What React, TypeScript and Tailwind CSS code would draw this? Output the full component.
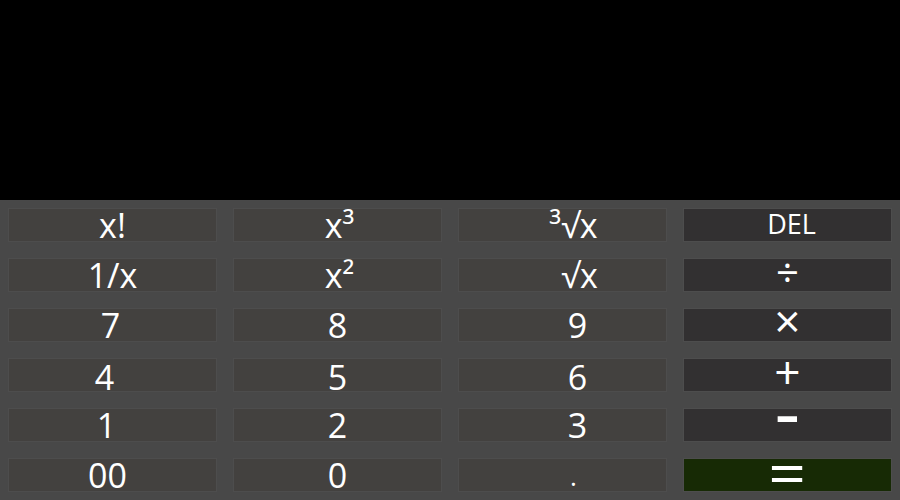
type Key = { label: React.ReactNode; kind: 'num' | 'op' | 'eq'; cls?: string }

const KEYS: Key[] = [
  { label: 'x!', kind: 'num' },
  { label: 'x³', kind: 'num', cls: 'text-[34px] translate-x-[2px]' },
  { label: '³√x', kind: 'num', cls: 'text-[34px] translate-x-[11px]' },
  { label: 'DEL', kind: 'op', cls: 'text-[27px] translate-x-[4px] -mt-[4px]' },
  { label: '1/x', kind: 'num' },
  { label: 'x²', kind: 'num', cls: 'text-[34px] translate-x-[2px]' },
  { label: '√x', kind: 'num', cls: 'text-[34px] translate-x-[17px]' },
  { label: '÷', kind: 'op', cls: 'text-[40px] -mt-[6px]' },
  { label: '7', kind: 'num', cls: 'text-[34px] -translate-x-[2px]' },
  { label: '8', kind: 'num' },
  { label: '9', kind: 'num', cls: 'text-[34px] translate-x-[15px]' },
  { label: '×', kind: 'op', cls: 'text-[46px] -mt-[10px]' },
  { label: '4', kind: 'num', cls: 'text-[34px] -translate-x-[8px] mt-[4px]' },
  { label: '5', kind: 'num', cls: 'text-[34px] mt-[4px]' },
  { label: '6', kind: 'num', cls: 'text-[34px] translate-x-[15px] mt-[4px]' },
  { label: '+', kind: 'op', cls: 'text-[46px] -mt-[8px]' },
  { label: '1', kind: 'num', cls: 'text-[34px] -translate-x-[6px]' },
  { label: '2', kind: 'num' },
  { label: '3', kind: 'num', cls: 'text-[34px] translate-x-[15px]' },
  { label: '-', kind: 'op', cls: 'text-[46px] font-bold -mt-[22px] scale-x-[1.6]' },
  { label: '00', kind: 'num', cls: 'text-[34px] -translate-x-[5px]' },
  { label: '0', kind: 'num' },
  { label: '.', kind: 'num', cls: 'text-[26px] translate-x-[11px] mt-[2px]' },
  { label: '=', kind: 'eq', cls: 'text-[60px] -mt-[6px] scale-x-[1.1]' },
]

export default function App() {
  return (
    <div className="w-[900px] h-[500px] flex flex-col bg-black" style={{ fontFamily: '"Open Sans", "DejaVu Sans", sans-serif' }}>
      <div className="h-[200px]" />
      <div className="h-[300px] grid grid-cols-4 grid-rows-6 bg-[#484848]">
        {KEYS.map((k, i) => (
          <button
            key={i}
            className={`m-2 flex items-center justify-center border border-[#4d4d4d] text-white leading-none ${
              k.kind === 'num' ? 'bg-[#43413f]' : k.kind === 'op' ? 'bg-[#323031]' : 'bg-[#172a05]'
            }`}
          >
            <span className={`block ${k.cls ?? 'text-[34px]'}`}>{k.label}</span>
          </button>
        ))}
      </div>
    </div>
  )
}
